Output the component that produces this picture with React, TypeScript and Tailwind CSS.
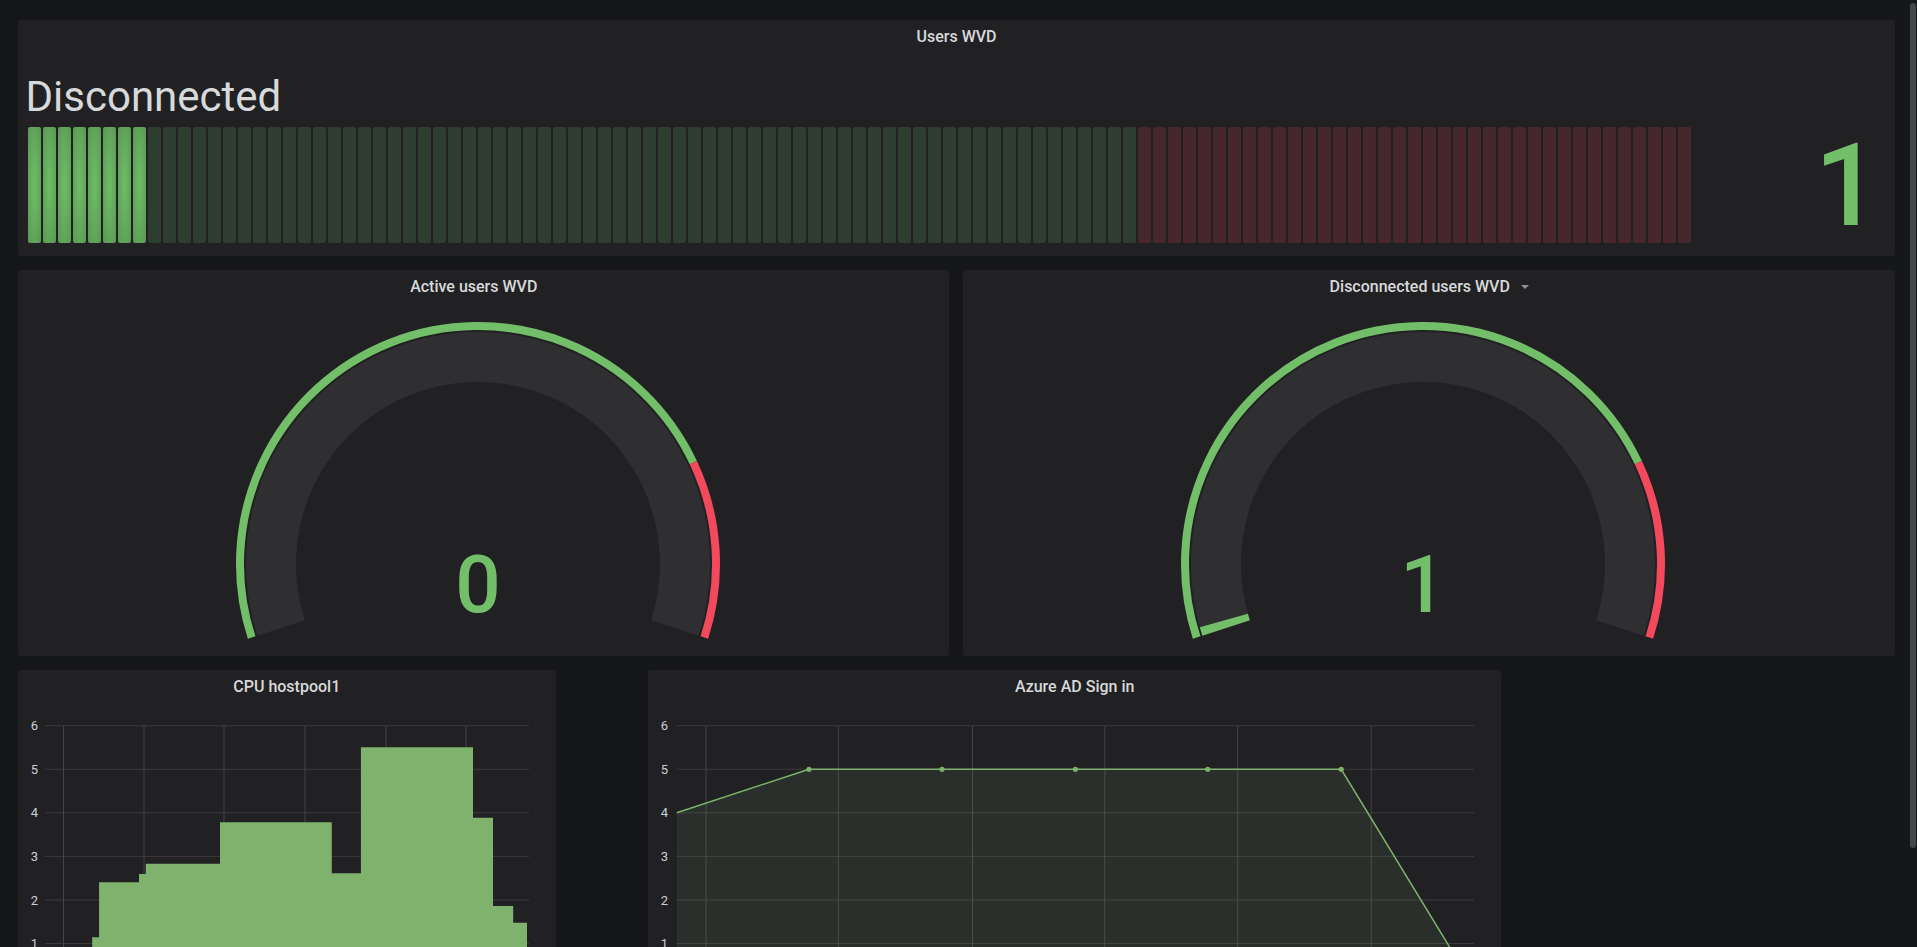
import React from "react";

// Grafana-ish colours
const GREEN = "#73bf69";
const RED = "#f2495c";
const SERIES = "#7eb26d";

const START = 0.9 * Math.PI;
const SWEEP = 1.2 * Math.PI;

function arc(cx: number, cy: number, r: number, a0: number, a1: number) {
  const x0 = cx + r * Math.cos(a0);
  const y0 = cy + r * Math.sin(a0);
  const x1 = cx + r * Math.cos(a1);
  const y1 = cy + r * Math.sin(a1);
  const large = a1 - a0 > Math.PI ? 1 : 0;
  return `M ${x0} ${y0} A ${r} ${r} 0 ${large} 1 ${x1} ${y1}`;
}

function Panel({
  title,
  caret,
  className = "",
  children,
}: {
  title: string;
  caret?: "show" | "hide";
  className?: string;
  children: React.ReactNode;
}) {
  return (
    <div className={`flex flex-col overflow-hidden rounded-[3px] bg-[#212124] ${className}`}>
      <div className="flex h-[34px] shrink-0 items-center justify-center">
        <span className="text-[16px] font-medium text-[#d8d9da]">{title}</span>
        {caret === "show" && (
          <span className="ml-[11px] h-0 w-0 border-x-[4.5px] border-t-[4px] border-x-transparent border-t-[#8e8e8e]" />
        )}
        {caret === "hide" && <span className="ml-[11px] w-[9px]" />}
      </div>
      {children}
    </div>
  );
}

function BarGauge() {
  const cells = Array.from({ length: 111 }, (_, i) => i);
  return (
    <div className="flex flex-col px-[10px] pt-[19px]">
      <div className="-ml-[2.5px] text-[42px] leading-[48px] text-[#d8d9da]">Disconnected</div>
      <div className="mt-[6px] flex h-[116px]">
        <div className="flex flex-1 gap-[2.3px]">
          {cells.map((i) => (
            <div
              key={i}
              className={`flex-1 rounded-[2px] ${
                i < 8
                  ? "bg-[radial-gradient(ellipse_at_center,#6fbd67_0%,#5a9854_100%)]"
                  : i < 74
                  ? "bg-[#2f3c30]"
                  : "bg-[#47272e]"
              }`}
            />
          ))}
        </div>
        <div className="flex w-[194px] items-center justify-end pr-[5px] text-[115px] font-medium leading-none text-[#73bf69]">
          1
        </div>
      </div>
    </div>
  );
}

function Gauge({ value, max = 100 }: { value: number; max?: number }) {
  const cx = 244;
  const cy = 260;
  return (
    <div className="flex flex-1 justify-center">
      <svg width={500} height={352} className="shrink-0">
        <path d={arc(cx, cy, 207, START, START + SWEEP)} stroke="#2f2f32" strokeWidth={50} fill="none" />
        {value > 0 && (
          <path
            d={arc(cx, cy, 207, START, START + (SWEEP * value) / max)}
            stroke={GREEN}
            strokeWidth={50}
            fill="none"
          />
        )}
        <path d={arc(cx, cy, 238, START, START + SWEEP * 0.8)} stroke={GREEN} strokeWidth={8} fill="none" />
        <path d={arc(cx, cy, 238, START + SWEEP * 0.8, START + SWEEP)} stroke={RED} strokeWidth={8} fill="none" />
        <text
          x={cx}
          y={308}
          textAnchor="middle"
          fontSize={80}
          fontWeight={500}
          fill={GREEN}
          fontFamily="Roboto, sans-serif"
        >
          {value}
        </text>
      </svg>
    </div>
  );
}

const TICKS = [6, 5, 4, 3, 2, 1];
const tickY = (v: number) => 21.7 + (6 - v) * 43.55;

function Axes({ x0, x1, vlines }: { x0: number; x1: number; vlines: number[] }) {
  return (
    <>
      {TICKS.map((t) => (
        <g key={t}>
          <line x1={x0} x2={x1} y1={tickY(t)} y2={tickY(t)} stroke="#3b3b3e" strokeWidth={1} />
          <text
            x={20}
            y={tickY(t) + 4.6}
            textAnchor="end"
            fontSize={13}
            fill="#c7d0d9"
            fontFamily="Roboto, sans-serif"
          >
            {t}
          </text>
        </g>
      ))}
      {vlines.map((x) => (
        <line key={x} x1={x} x2={x} y1={tickY(6)} y2={300} stroke="#434346" strokeWidth={1} />
      ))}
    </>
  );
}

function CpuChart() {
  const base = tickY(0);
  const steps: [number, number][] = [
    [74.2, 233.3],
    [81.1, 178.3],
    [121, 170],
    [127.8, 159.7],
    [202, 118.3],
    [313.8, 169.3],
    [342.9, 43.3],
    [455, 113.7],
    [475, 202],
    [495.2, 218.7],
  ];
  let d = `M 74.2 ${base}`;
  steps.forEach(([x, y], i) => {
    d += ` L ${x} ${i === 0 ? y : steps[i - 1][1]} L ${x} ${y}`;
  });
  d += ` L 509 ${steps[steps.length - 1][1]} L 509 ${base} Z`;
  return (
    <svg width={538} height={300} className="block shrink-0">
      <Axes x0={27} x1={511} vlines={[45.5, 126, 206, 287, 368, 448]} />
      <path d={d} fill={SERIES} />
    </svg>
  );
}

function AzureChart() {
  const base = tickY(0);
  const pts: [number, number][] = [
    [28.8, tickY(4)],
    [161, tickY(5)],
    [294, tickY(5)],
    [427.4, tickY(5)],
    [559.7, tickY(5)],
    [693.2, tickY(5)],
    [826, base],
  ];
  const line = pts.map(([x, y], i) => `${i ? "L" : "M"} ${x} ${y}`).join(" ");
  const area = `${line} L 28.8 ${base} Z`;
  return (
    <svg width={853} height={300} className="block shrink-0">
      <Axes x0={28.8} x1={826} vlines={[58, 190.4, 324.5, 456.8, 589.7, 723.2]} />
      <path d={area} fill="rgba(126,178,109,0.1)" />
      <path d={line} stroke={SERIES} strokeWidth={1.5} fill="none" />
      {pts.slice(1, 6).map(([x, y]) => (
        <circle key={x} cx={x} cy={y} r={2.6} fill={SERIES} />
      ))}
    </svg>
  );
}

export default function App() {
  return (
    <div className="relative h-[947px] w-full overflow-hidden bg-[#161719] pl-[18px] pr-[22px] pt-[20px] font-['Roboto',sans-serif]">
      <div className="grid grid-cols-[repeat(24,minmax(0,1fr))] grid-rows-[236px_386px_320px] gap-[14px]">
        <Panel title="Users WVD" className="col-span-full">
          <BarGauge />
        </Panel>

        <Panel title="Active users WVD" caret="hide" className="col-span-12">
          <Gauge value={0} />
        </Panel>
        <Panel title="Disconnected users WVD" caret="show" className="col-span-12">
          <Gauge value={1} />
        </Panel>

        <Panel title="CPU hostpool1" className="col-span-7">
          <CpuChart />
        </Panel>
        <Panel title="Azure AD Sign in" className="col-span-11 col-start-9">
          <AzureChart />
        </Panel>
      </div>

      {/* fake scrollbar thumb */}
      <div className="absolute right-[1px] top-[3px] h-[845px] w-[6px] rounded-[3px] bg-[#44464d]" />
    </div>
  );
}
